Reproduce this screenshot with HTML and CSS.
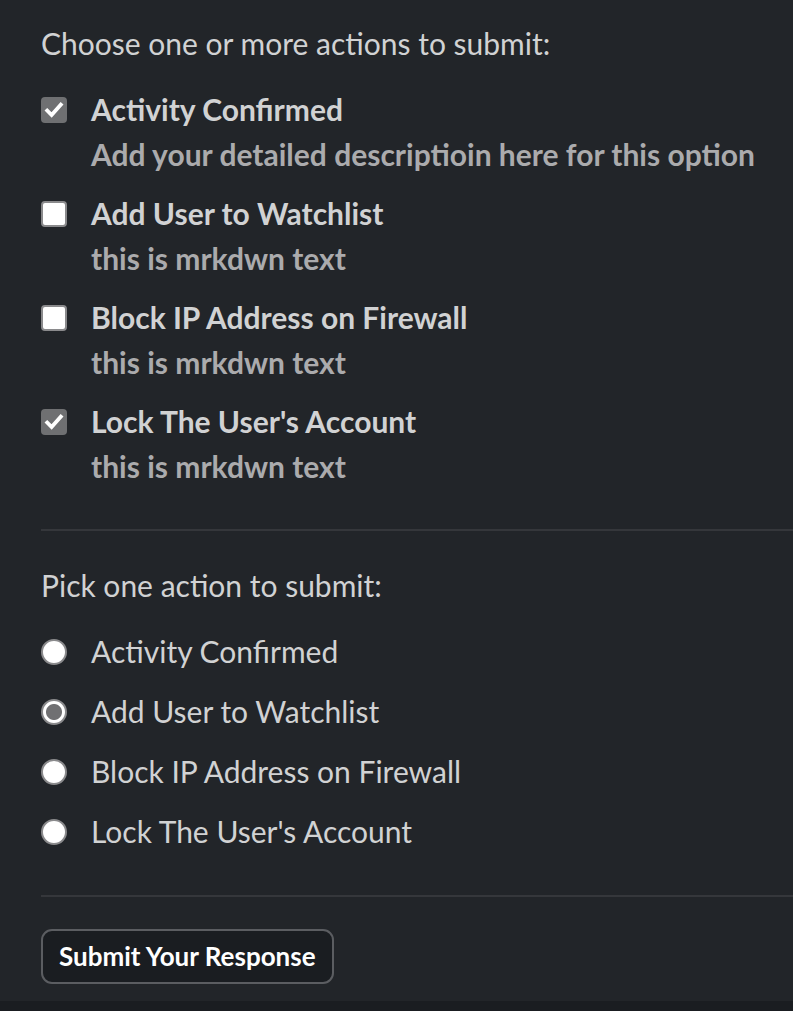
FILE: index.html
```html
<!DOCTYPE html>
<html>
<head>
<meta charset="utf-8">
<link rel="stylesheet" href="styles.css">
</head>
<body>
<div class="page">
  <section class="block checks">
    <div class="heading">Choose one or more actions to submit:</div>
    <div class="options">
      <div class="opt">
        <span class="cb on"><svg viewBox="0 0 26 26"><path d="M6.2 13.6l4.4 4.4 9.2-10.4" fill="none" stroke="#fff" stroke-width="3.8" stroke-linecap="square"/></svg></span>
        <div class="txt"><div class="title">Activity Confirmed</div><div class="desc">Add your detailed descriptioin here for this option</div></div>
      </div>
      <div class="opt">
        <span class="cb"></span>
        <div class="txt"><div class="title">Add User to Watchlist</div><div class="desc">this is mrkdwn text</div></div>
      </div>
      <div class="opt">
        <span class="cb"></span>
        <div class="txt"><div class="title">Block IP Address on Firewall</div><div class="desc">this is mrkdwn text</div></div>
      </div>
      <div class="opt">
        <span class="cb on"><svg viewBox="0 0 26 26"><path d="M6.2 13.6l4.4 4.4 9.2-10.4" fill="none" stroke="#fff" stroke-width="3.8" stroke-linecap="square"/></svg></span>
        <div class="txt"><div class="title">Lock The User's Account</div><div class="desc">this is mrkdwn text</div></div>
      </div>
    </div>
  </section>
  <hr class="divider">
  <section class="block radios">
    <div class="heading">Pick one action to submit:</div>
    <div class="ropts">
      <div class="ropt"><span class="rb"></span><span class="rlabel">Activity Confirmed</span></div>
      <div class="ropt"><span class="rb sel"></span><span class="rlabel">Add User to Watchlist</span></div>
      <div class="ropt"><span class="rb"></span><span class="rlabel">Block IP Address on Firewall</span></div>
      <div class="ropt"><span class="rb"></span><span class="rlabel">Lock The User's Account</span></div>
    </div>
  </section>
  <hr class="divider second">
  <div class="actions"><button class="submit">Submit Your Response</button></div>
</div>
<div class="strip"></div>
</body>
</html>
```
FILE: styles.css
```css
html, body {
  margin: 0;
  padding: 0;
  background: #222529;
}
body {
  font-family: Lato, "Noto Sans", sans-serif;
  color: #d1d2d3;
  width: 793px;
  height: 1011px;
  overflow: hidden;
  display: flex;
  flex-direction: column;
}
.page {
  padding: 21px 0 0 41px;
  height: 1001px;
  box-sizing: border-box;
}
.heading {
  font-size: 30px;
  line-height: 45px;
}
.options {
  margin-top: 20.5px;
  display: flex;
  flex-direction: column;
  gap: 14px;
}
.opt {
  display: flex;
  align-items: flex-start;
  gap: 24px;
}
.cb {
  width: 26px;
  height: 26px;
  box-sizing: border-box;
  margin-top: 10px;
  border: 2px solid #8a8a8c;
  border-radius: 4px;
  background: #fff;
  flex: none;
  display: block;
}
.cb.on {
  background: #6f7072;
  border: 0;
}
.cb svg {
  display: block;
  width: 26px;
  height: 26px;
}
.title {
  font-size: 30px;
  line-height: 45px;
  font-weight: 700;
  color: #d1d2d3;
}
.desc {
  font-size: 30px;
  line-height: 45px;
  font-weight: 700;
  color: #ababad;
}
.divider {
  border: 0;
  height: 2px;
  background: #35373b;
  margin: 40px 0 0 0;
}
.radios {
  margin-top: 32.5px;
}
.ropts {
  margin-top: 21px;
  display: flex;
  flex-direction: column;
  gap: 15px;
}
.ropt {
  display: flex;
  align-items: center;
  gap: 24px;
  height: 45px;
}
.rb {
  width: 26px;
  height: 26px;
  box-sizing: border-box;
  border-radius: 50%;
  border: 2px solid #8a8a8c;
  background: #fff;
  flex: none;
}
.rb.sel {
  border: 2px solid #8a8a8c;
  background: radial-gradient(circle, #707072 0 7.5px, #fff 8.5px);
}
.rlabel {
  font-size: 30px;
  line-height: 45px;
}
.divider.second {
  margin-top: 40.5px;
}
.actions {
  margin-top: 32px;
}
.submit {
  font-family: Lato, "Noto Sans", sans-serif;
  font-size: 26px;
  font-weight: 700;
  color: #ffffff;
  background: #1a1d21;
  border: 2px solid #5b5d61;
  border-radius: 11px;
  height: 55px;
  padding: 0 16px;
  box-sizing: border-box;
  white-space: nowrap;
}
.strip {
  flex: none;
  height: 10px;
  background: #1a1d21;
}
```
